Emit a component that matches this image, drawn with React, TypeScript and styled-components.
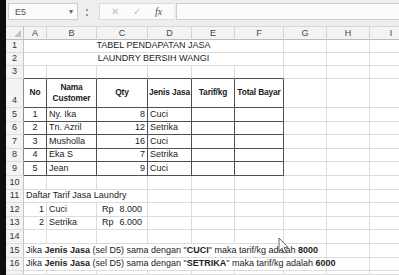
import { ReactNode } from 'react'
import styled, { createGlobalStyle } from 'styled-components'

type Align = 'left' | 'center' | 'right'

type CellSpec = {
  col: number
  span?: number
  text?: ReactNode
  align?: Align
  bold?: boolean
  wrap?: boolean
  money?: [string, string]
}

const COLS = ['A', 'B', 'C', 'D', 'E', 'F', 'G', 'H', 'I']

const data: Record<number, CellSpec[]> = {
  1: [{ col: 0, span: 6, text: 'TABEL PENDAPATAN JASA', align: 'center' }],
  2: [{ col: 0, span: 6, text: 'LAUNDRY BERSIH WANGI', align: 'center' }],
  4: [
    { col: 0, text: 'No', align: 'center', bold: true },
    { col: 1, text: 'Nama Customer', align: 'center', bold: true, wrap: true },
    { col: 2, text: 'Qty', align: 'center', bold: true },
    { col: 3, text: 'Jenis Jasa', align: 'center', bold: true },
    { col: 4, text: 'Tarif/kg', align: 'center', bold: true },
    { col: 5, text: 'Total Bayar', align: 'center', bold: true },
  ],
  11: [{ col: 0, span: 3, text: 'Daftar Tarif Jasa Laundry' }],
  12: [
    { col: 0, text: '1', align: 'right' },
    { col: 1, text: 'Cuci' },
    { col: 2, money: ['Rp', '8.000'] },
  ],
  13: [
    { col: 0, text: '2', align: 'right' },
    { col: 1, text: 'Setrika' },
    { col: 2, money: ['Rp', '6.000'] },
  ],
  15: [
    {
      col: 0,
      span: 7,
      text: (
        <span>
          Jika <b>Jenis Jasa</b> (sel D5) sama dengan "<b>CUCI</b>" maka tarif/kg adalah <b>8000</b>
        </span>
      ),
    },
  ],
  16: [
    {
      col: 0,
      span: 7,
      text: (
        <span>
          Jika <b>Jenis Jasa</b> (sel D5) sama dengan "<b>SETRIKA</b>" maka tarif/kg adalah{' '}
          <b>6000</b>
        </span>
      ),
    },
  ],
}

const customers: [string, number, string][] = [
  ['Ny. Ika', 8, 'Cuci'],
  ['Tn. Azril', 12, 'Setrika'],
  ['Musholla', 16, 'Cuci'],
  ['Eka S', 7, 'Setrika'],
  ['Jean', 9, 'Cuci'],
]

customers.forEach(([name, qty, jenis], i) => {
  data[5 + i] = [
    { col: 0, text: String(i + 1), align: 'center' },
    { col: 1, text: name },
    { col: 2, text: String(qty), align: 'right' },
    { col: 3, text: jenis },
  ]
})

const inTable = (row: number, col: number) => row >= 4 && row <= 9 && col <= 5

export default function App() {
  const renderRow = (row: number) => {
    const specs = data[row] ?? []
    const cells: ReactNode[] = []
    let col = 0
    while (col < COLS.length) {
      const spec = specs.find((s) => s.col === col)
      const span = spec?.span ?? 1
      const last = col + span - 1
      cells.push(
        <Cell
          key={`${row}-${col}`}
          $span={span}
          $align={spec?.align ?? 'left'}
          $bold={spec?.bold}
          $wrap={spec?.wrap}
          $head={row === 4}
          $rb={inTable(row, last)}
          $bb={inTable(row, col) || (row === 3 && col <= 5)}
        >
          {spec?.money ? (
            <Money>
              <span>{spec.money[0]}</span>
              <span>{spec.money[1]}</span>
            </Money>
          ) : (
            spec?.text
          )}
        </Cell>
      )
      col += span
    }
    return (
      <RowGroup key={row}>
        {/* row 17 only peeks in at the bottom edge */}
        <RowHead $dark={row >= 4 && row <= 9}>{row < 17 ? row : ''}</RowHead>
        {cells}
      </RowGroup>
    )
  }

  return (
    <>
      <GlobalStyle />
      <Screen>
        <EdgeStrip />
        <Workbook>
          <FormulaBar>
            <NameBox>
              <span>E5</span>
              <Caret>▾</Caret>
            </NameBox>
            <Grip />
            <FxGroup>
              <FxButton>✕</FxButton>
              <FxButton>✓</FxButton>
              <FxLabel>fx</FxLabel>
            </FxGroup>
            <FormulaInput />
          </FormulaBar>

          <Sheet>
            <Corner>
              <CornerMark />
            </Corner>
            {COLS.map((c) => (
              <ColHead key={c}>{c}</ColHead>
            ))}
            {Array.from({ length: 17 }, (_, i) => renderRow(i + 1))}
          </Sheet>
        </Workbook>

        <Pointer width="11" height="17" viewBox="0 0 11 17">
          <path
            d="M1 1 L1 14 L4 11.2 L6.3 16 L8.3 15.1 L6.1 10.4 L10 10.4 Z"
            fill="#fff"
            stroke="#555"
            strokeWidth="0.9"
            strokeLinejoin="round"
          />
        </Pointer>
      </Screen>
    </>
  )
}

const GlobalStyle = createGlobalStyle`
  html, body {
    margin: 0;
    padding: 0;
    background: #ffffff;
  }
  body {
    font-family: 'Liberation Sans', Arial, sans-serif;
  }
`

const Screen = styled.div`
  position: relative;
  width: 399px;
  height: 275px;
  overflow: hidden;
  display: flex;
  background: #ffffff;
`

const EdgeStrip = styled.div`
  width: 6px;
  flex-shrink: 0;
  background: #0d0d0d;
`

const Workbook = styled.div`
  flex: 1;
  min-width: 0;
  display: flex;
  flex-direction: column;
  overflow: hidden;
`

const FormulaBar = styled.div`
  height: 27px;
  flex-shrink: 0;
  box-sizing: border-box;
  display: flex;
  align-items: flex-start;
  padding: 3px 0 0 2px;
  background: #eeeeee;
  border-bottom: 1px solid #d6d6d6;
`

const NameBox = styled.div`
  width: 70px;
  height: 17px;
  box-sizing: border-box;
  display: flex;
  align-items: center;
  justify-content: space-between;
  padding: 0 4px 0 6px;
  background: #fbfbfb;
  border: 1px solid #cdcdcd;
  font-size: 9px;
  color: #555;
`

const Caret = styled.span`
  font-size: 8px;
  color: #666;
`

const Grip = styled.div`
  width: 2px;
  height: 7px;
  margin: 6px 9px 0 8px;
  border-left: 2px dotted #9a9a9a;
`

const FxGroup = styled.div`
  width: 75px;
  height: 17px;
  box-sizing: border-box;
  display: flex;
  align-items: center;
  padding-left: 9px;
  gap: 10px;
  background: #fbfbfb;
  border: 1px solid #dadada;
  border-right: none;
`

const FxButton = styled.span`
  font-size: 10px;
  color: #bdbdbd;
  width: 12px;
  text-align: center;
`

const FxLabel = styled.span`
  font-family: 'Liberation Serif', serif;
  font-style: italic;
  font-size: 10px;
  color: #555;
  margin-left: 2px;
`

const FormulaInput = styled.div`
  flex: 1;
  height: 17px;
  margin-left: 2px;
  box-sizing: border-box;
  background: #fbfbfb;
  border: 1px solid #cfcfcf;
  border-right: none;
`

const Sheet = styled.div`
  display: grid;
  grid-template-columns: 18px 23px 50px 51px 44px 43px 49px 43px 43px 43px;
  grid-template-rows: 13px 13px 13px 13px 29px repeat(12, 13.6px) 1fr;
  flex: 1;
  overflow: hidden;
`

const RowGroup = styled.div`
  display: contents;
`

const Corner = styled.div`
  position: relative;
  box-sizing: border-box;
  background: #f3f3f3;
  border-right: 1px solid #c4c4c4;
  border-bottom: 1px solid #bcbcbc;
`

const CornerMark = styled.div`
  position: absolute;
  right: 2px;
  bottom: 2px;
  width: 0;
  height: 0;
  border-left: 7px solid transparent;
  border-bottom: 7px solid #c4c4c4;
`

const ColHead = styled.div`
  box-sizing: border-box;
  display: flex;
  align-items: center;
  justify-content: center;
  background: #f3f3f3;
  border-right: 1px solid #d2d2d2;
  border-bottom: 1px solid #bcbcbc;
  font-size: 9px;
  color: #444;
`

const RowHead = styled.div<{ $dark?: boolean }>`
  box-sizing: border-box;
  display: flex;
  align-items: flex-end;
  justify-content: center;
  padding-bottom: 1px;
  background: #f3f3f3;
  border-right: 1px solid ${({ $dark }) => ($dark ? '#8a8a8a' : '#c4c4c4')};
  border-bottom: 1px solid #dcdcdc;
  font-size: 9px;
  line-height: 11px;
  color: #333;
`

const Cell = styled.div<{
  $span: number
  $align: Align
  $bold?: boolean
  $wrap?: boolean
  $head?: boolean
  $rb?: boolean
  $bb?: boolean
}>`
  grid-column: span ${({ $span }) => $span};
  box-sizing: border-box;
  min-width: 0;
  display: flex;
  align-items: ${({ $head }) => ($head ? 'center' : 'flex-end')};
  justify-content: ${({ $align }) =>
    $align === 'left' ? 'flex-start' : $align === 'right' ? 'flex-end' : 'center'};
  text-align: ${({ $align }) => $align};
  padding: 0 2px 1px;
  font-size: ${({ $bold }) => ($bold ? '8.4px' : '9px')};
  line-height: 11px;
  letter-spacing: ${({ $bold }) => ($bold ? '-0.15px' : '0')};
  font-weight: ${({ $bold }) => ($bold ? 700 : 400)};
  white-space: ${({ $wrap }) => ($wrap ? 'normal' : 'nowrap')};
  color: #1c1c1c;
  border-right: 1px solid ${({ $rb }) => ($rb ? '#505050' : '#dcdcdc')};
  border-bottom: 1px solid ${({ $bb }) => ($bb ? '#505050' : '#dcdcdc')};

  b {
    font-weight: 700;
  }
`

const Money = styled.div`
  flex: 1;
  display: flex;
  justify-content: space-between;
  padding: 0 3px;
`

const Pointer = styled.svg`
  position: absolute;
  left: 278px;
  top: 237px;
`
